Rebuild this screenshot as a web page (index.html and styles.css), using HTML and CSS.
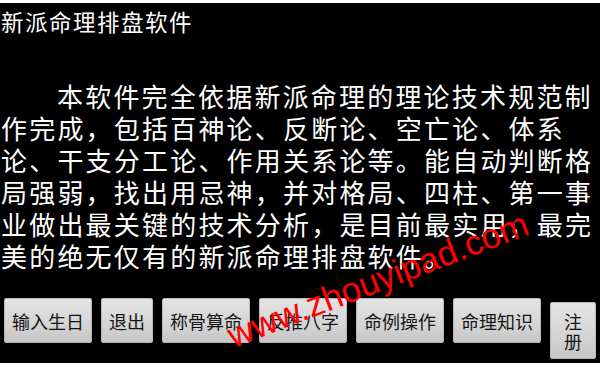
FILE: index.html
```html
<!DOCTYPE html>
<html lang="zh-CN">
<head>
<meta charset="utf-8">
<title>新派命理排盘软件</title>
<link rel="stylesheet" href="styles.css">
</head>
<body>
<div class="screen">
  <div class="title">新派命理排盘软件</div>
  <p class="intro">本软件完全依据新派命理的理论技术规范制作完成，包括百神论、反断论、空亡论、体系论、干支分工论、作用关系论等。能自动判断格局强弱，找出用忌神，并对格局、四柱、第一事业做出最关键的技术分析，是目前最实用，最完美的绝无仅有的新派命理排盘软件。</p>
  <div class="buttons">
    <div class="btn">输入生日</div>
    <div class="btn">退出</div>
    <div class="btn">称骨算命</div>
    <div class="btn">反推八字</div>
    <div class="btn">命例操作</div>
    <div class="btn">命理知识</div>
    <div class="btn btn-narrow">注册</div>
  </div>
  <div class="watermark">www.zhouyipad.com</div>
</div>
</body>
</html>
```

FILE: styles.css
```css
html, body {
  margin: 0;
  padding: 0;
  background: #ffffff;
}

.screen {
  position: relative;
  margin-top: 3px;
  height: 360px;
  width: 600px;
  background: #000000;
  overflow: hidden;
  font-family: "Noto Sans CJK SC", "Noto Sans", sans-serif;
  color: #ffffff;
  box-sizing: border-box;
  padding: 4px 0 0 1px;
}

.title {
  font-size: 22.5px;
  line-height: 28px;
  letter-spacing: 1.5px;
  white-space: nowrap;
}

.intro {
  margin: 45px 0 0 0;
  font-size: 26px;
  line-height: 32px;
  letter-spacing: 2.2px;
  text-indent: 56px;
  height: 192px;
}

.buttons {
  display: flex;
  align-items: baseline;
  gap: 9px;
  margin: 26px 0 0 3px;
}

.btn {
  display: flex;
  align-items: center;
  justify-content: center;
  box-sizing: border-box;
  min-height: 45px;
  padding: 8px 7px;
  font-size: 18px;
  line-height: 20px;
  color: #141414;
  text-align: center;
  background: linear-gradient(#e4e4e4, #d4d4d4 60%, #c6c6c6);
  border: 1px solid #b8b8b8;
  border-radius: 2px;
}

.btn-narrow {
  width: 46px;
  padding: 8px 12px 7px;
}

.watermark {
  position: absolute;
  left: 233px;
  top: 315px;
  font-family: "Liberation Sans", Arial, sans-serif;
  font-size: 35px;
  line-height: 1;
  color: #ff0000;
  white-space: nowrap;
  transform-origin: 0 29.6px;
  transform: rotate(-21deg);
}
```
